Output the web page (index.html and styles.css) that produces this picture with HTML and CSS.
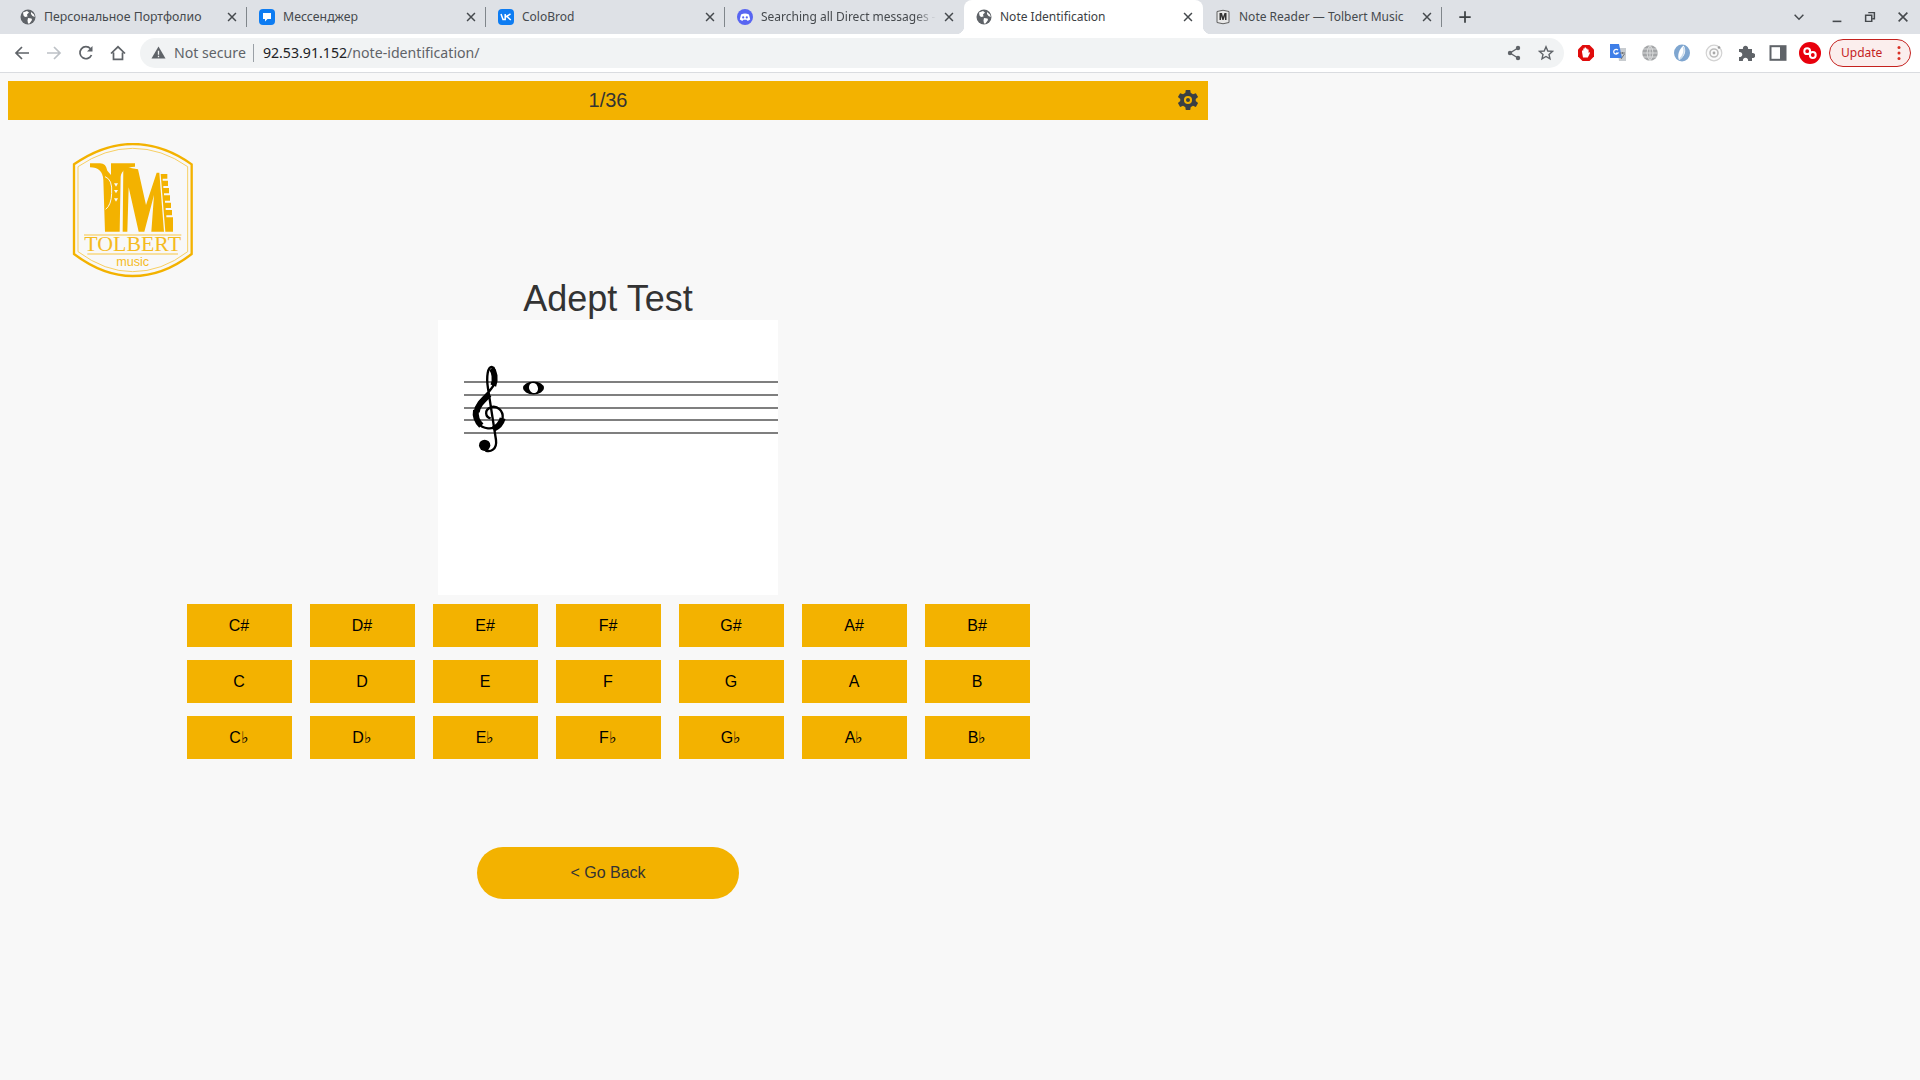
FILE: index.html
```html
<!DOCTYPE html>
<html lang="en">
<head>
  <meta charset="UTF-8" />
  <title>Note Identification</title>
  <link rel="stylesheet" href="styles.css">
</head>
<body>
  <svg class="defs" width="0" height="0">
    <symbol id="globe" viewBox="0 0 16 16">
      <circle cx="8" cy="8" r="7.5" fill="#5f6368"/>
      <path d="M3 3.5 L7 2 L9 3.5 L7 5.5 L7.5 7.5 L5 8 L3.5 6.5Z M8 9 L11.5 9.5 L12 11 L9.5 14.5 L8 14.5 L7.5 11.5Z M11 3 L14 5.5 L14.8 8 L12.5 7 L11 5Z" fill="#fff"/>
    </symbol>
    <symbol id="close" viewBox="0 0 16 16">
      <path d="M3.5 3.5 L12.5 12.5 M12.5 3.5 L3.5 12.5" stroke="#45494d" stroke-width="1.7" fill="none"/>
    </symbol>
  </svg>

  <div class="tabstrip">
    <div class="tab sep">
      <svg class="favicon"><use href="#globe"/></svg>
      <span class="tab-title ru">Персональное Портфолио</span>
      <svg class="tab-close"><use href="#close"/></svg>
    </div>
    <div class="tab sep">
      <svg class="favicon" viewBox="0 0 16 16">
        <rect width="16" height="16" rx="4" fill="#0d7cf2"/>
        <path d="M4 4 H12 V10 H8.5 L6 12.5 V10 H4Z" fill="#fff"/>
      </svg>
      <span class="tab-title ru">Мессенджер</span>
      <svg class="tab-close"><use href="#close"/></svg>
    </div>
    <div class="tab sep">
      <svg class="favicon" viewBox="0 0 16 16">
        <rect width="16" height="16" rx="4" fill="#0d7cf2"/>
        <path d="M3 5 L5 10.5 L7.2 10.5 L7.2 5 M7.5 8 L12.5 5 M9 7.5 L12.8 11" stroke="#fff" stroke-width="1.5" fill="none"/>
      </svg>
      <span class="tab-title">ColoBrod</span>
      <svg class="tab-close"><use href="#close"/></svg>
    </div>
    <div class="tab">
      <svg class="favicon" viewBox="0 0 16 16">
        <circle cx="8" cy="8" r="8" fill="#5865f2"/>
        <path d="M4 5.5 Q8 3.6 12 5.5 L13.2 10.5 Q11.5 11.8 10.3 11.8 L9.6 10.8 H6.4 L5.7 11.8 Q4.5 11.8 2.8 10.5Z" fill="#fff"/>
        <circle cx="6.2" cy="8.4" r="1.1" fill="#5865f2"/>
        <circle cx="9.8" cy="8.4" r="1.1" fill="#5865f2"/>
      </svg>
      <span class="tab-title fade">Searching all Direct messages -</span>
      <svg class="tab-close"><use href="#close"/></svg>
    </div>
    <div class="tab active">
      <svg class="favicon"><use href="#globe"/></svg>
      <span class="tab-title">Note Identification</span>
      <svg class="tab-close"><use href="#close"/></svg>
    </div>
    <div class="tab sep">
      <svg class="favicon" viewBox="0 0 16 16">
        <path d="M2 2.5 Q8 0 14 2.5 V13.5 Q8 16 2 13.5Z" fill="#e8e8e8" stroke="#5f5f5f"/>
        <path d="M4.5 4 H7 L8 8 L9.5 4 H11.5 V11 H10 V7 L8.6 11 H7.4 L6 7 V11 H4.5Z" fill="#333"/>
      </svg>
      <span class="tab-title">Note Reader — Tolbert Music</span>
      <svg class="tab-close"><use href="#close"/></svg>
    </div>
    <svg class="new-tab" viewBox="0 0 16 16">
      <path d="M8 1.5 V14.5 M1.5 8 H14.5" stroke="#3c4043" stroke-width="2" fill="none"/>
    </svg>
    <div class="window-controls">
      <svg class="tab-search" viewBox="0 0 16 16"><path d="M3 5.5 L8 10.5 L13 5.5" stroke="#45494d" stroke-width="1.7" fill="none"/></svg>
      <svg viewBox="0 0 16 16"><path d="M3 13 H13" stroke="#45494d" stroke-width="1.8" fill="none"/></svg>
      <svg viewBox="0 0 16 16"><path d="M6 3 H13 V10 H11 M3 6 H10 V13 H3Z" stroke="#45494d" stroke-width="1.7" fill="none"/></svg>
      <svg viewBox="0 0 16 16"><path d="M3 3 L13 13 M13 3 L3 13" stroke="#45494d" stroke-width="1.8" fill="none"/></svg>
    </div>
  </div>

  <div class="toolbar">
    <div class="nav-buttons">
      <svg viewBox="0 0 16 16"><path d="M15 8 H2 M8 2 L2 8 L8 14" stroke="#5f6368" stroke-width="1.7" fill="none"/></svg>
      <svg viewBox="0 0 16 16"><path d="M1 8 H14 M8 2 L14 8 L8 14" stroke="#bdc1c6" stroke-width="1.7" fill="none"/></svg>
      <svg viewBox="0 0 16 16"><path d="M13.5 10 A6 6 0 1 1 12.5 3.8" stroke="#5f6368" stroke-width="1.7" fill="none"/><path d="M14.5 1 V6.5 H9Z" fill="#5f6368"/></svg>
      <svg viewBox="0 0 16 16"><path d="M1 8.5 L8 1.8 L15 8.5 M3.5 7.5 V14.3 H12.5 V7.5" stroke="#5f6368" stroke-width="1.7" fill="none"/></svg>
    </div>
    <div class="omnibox">
      <svg class="warn" viewBox="0 0 16 16"><path d="M8 1.5 L15.5 14.5 H0.5Z" fill="#5f6368"/><path d="M8 6 V10.5 M8 11.5 V13" stroke="#f1f3f4" stroke-width="1.4"/></svg>
      <span class="not-secure">Not secure</span>
      <span class="url"><b>92.53.91.152</b>/note-identification/</span>
      <svg class="omni-icon" viewBox="0 0 16 16">
        <path d="M12 3 L4 8 L12 13" stroke="#5f6368" stroke-width="1.4" fill="none"/>
        <circle cx="12" cy="3" r="2.2" fill="#5f6368"/><circle cx="4" cy="8" r="2.2" fill="#5f6368"/><circle cx="12" cy="13" r="2.2" fill="#5f6368"/>
      </svg>
      <svg class="omni-icon" viewBox="0 0 16 16"><path d="M8 1.8 L9.8 6 L14.4 6.4 L11 9.4 L12 13.9 L8 11.5 L4 13.9 L5 9.4 L1.6 6.4 L6.2 6Z" stroke="#5f6368" stroke-width="1.4" fill="none"/></svg>
    </div>
    <div class="extensions">
      <svg viewBox="0 0 18 18">
        <path d="M5.5 1 H12.5 L17 5.5 V12.5 L12.5 17 H5.5 L1 12.5 V5.5Z" fill="#e00c0c"/>
        <path d="M6 13.5 L5 8 V6.5 H6.3 V4.5 H7.6 V3.5 H9 V4.5 H10.3 V5.5 H11.6 V9 L12.6 8 L13 9 L10.8 13.5Z" fill="#fff"/>
      </svg>
      <svg viewBox="0 0 18 18">
        <path d="M8 4 H17 V17 H10Z" fill="#c8ccd0"/>
        <path d="M1 0 H10 L13 14 H1Z" fill="#3f7fe8"/>
        <path d="M9 6.2 A2.4 2.4 0 1 0 9 9.2 H7" stroke="#fff" stroke-width="1.2" fill="none"/>
        <path d="M11 9 H16 M13.5 8 V10 M12 15 L15.5 10" stroke="#70757a" stroke-width="1" fill="none"/>
      </svg>
      <svg viewBox="0 0 18 18">
        <circle cx="9" cy="9" r="7.8" fill="#a4a6a8"/>
        <path d="M1 9 H17 M2 5 H16 M2 13 H16 M9 1 V17 M9 1 Q3 9 9 17 M9 1 Q15 9 9 17" stroke="#e3e4e5" stroke-width=".8" fill="none"/>
      </svg>
      <svg viewBox="0 0 18 18">
        <ellipse cx="9" cy="9" rx="8" ry="8.5" fill="#7fa6d0"/>
        <path d="M10.5 1.5 C14 6 12 13 6 16 C4 12 6 5 10.5 1.5Z" fill="#fff"/>
        <path d="M10.5 3 C12 7 10 12 7 15" stroke="#c9dbec" stroke-width="1.6" fill="none"/>
      </svg>
      <svg viewBox="0 0 18 18">
        <circle cx="9" cy="9" r="7.8" fill="#fbfbfb" stroke="#d2d2d2" stroke-width="1.2"/>
        <circle cx="9" cy="9" r="4" fill="none" stroke="#bcbcbc" stroke-width="1.6"/>
        <circle cx="9" cy="9" r="1.4" fill="#a8a8a8"/>
        <circle cx="14" cy="3.5" r="1.3" fill="#9a9a9a"/>
      </svg>
      <svg viewBox="0 0 18 18">
        <path d="M2 5 H6 A2.6 2.6 0 1 1 11 5 H15 V9 A2.6 2.6 0 1 1 15 14 V17 H11 A2.6 2.6 0 1 0 6 17 H2 V13 A2.6 2.6 0 1 0 2 8Z" fill="#5f6368"/>
      </svg>
      <svg viewBox="0 0 18 18">
        <rect x="1.5" y="2.2" width="15" height="13.6" fill="none" stroke="#5f6368" stroke-width="2"/>
        <rect x="11" y="2" width="5" height="14" fill="#5f6368"/>
      </svg>
      <svg class="ext-red" viewBox="0 0 22 22">
        <circle cx="11" cy="11" r="11" fill="#e8000c"/>
        <circle cx="8.2" cy="9.2" r="2.9" fill="none" stroke="#fff" stroke-width="2"/>
        <circle cx="13.8" cy="13" r="2.9" fill="none" stroke="#fff" stroke-width="2"/>
      </svg>
    </div>
    <div class="update-pill">
      <span>Update</span>
      <svg viewBox="0 0 4 16"><circle cx="2" cy="2.5" r="1.5"/><circle cx="2" cy="8" r="1.5"/><circle cx="2" cy="13.5" r="1.5"/></svg>
    </div>
  </div>

  <div class="page">
    <div class="progress-bar">
      <span>1/36</span>
      <svg class="gear" viewBox="0 0 24 24">
        <path fill-rule="evenodd" fill="#3a3f44" d="M9.6 1 H14.4 L15 4.3 Q16.3 4.8 17.4 5.6 L20.6 4.5 L23 8.6 L20.4 10.8 Q20.6 12 20.4 13.2 L23 15.4 L20.6 19.5 L17.4 18.4 Q16.3 19.2 15 19.7 L14.4 23 H9.6 L9 19.7 Q7.7 19.2 6.6 18.4 L3.4 19.5 L1 15.4 L3.6 13.2 Q3.4 12 3.6 10.8 L1 8.6 L3.4 4.5 L6.6 5.6 Q7.7 4.8 9 4.3Z M12 7.6 A4.4 4.4 0 1 0 12 16.4 A4.4 4.4 0 1 0 12 7.6Z M12 9.8 A2.2 2.2 0 1 1 12 14.2 A2.2 2.2 0 1 1 12 9.8Z"/>
      </svg>
    </div>

    <svg class="logo" viewBox="0 39 510 405">
      <path d="M72 103 Q160 42 248 42 Q340 42 425 103 V372 Q340 438 248 438 Q160 438 72 372Z" fill="none" stroke="#f3b200" stroke-width="7"/>
      <path d="M84 110 Q165 55 248 55 Q335 55 413 110 V365 Q335 425 248 425 Q165 425 84 365Z" fill="none" stroke="#f7c744" stroke-width="2.5"/>
      <path d="M120 100 H150 Q168 100 172 122 L183 135 V100 H255 V110 Q215 112 212 140 L209 305 H165 L160 150 Q158 112 120 112Z" fill="#f3b200"/>
      <path d="M165 140 Q188 148 185 190 Q184 225 167 238" fill="none" stroke="#f8f8f8" stroke-width="3"/>
      <path d="M192 160 H204 L198 170Z M192 180 H204 L198 190Z M192 205 H204 L198 215Z" fill="#f8f8f8"/>
      <path d="M220 110 L264 118 L288 225 L320 128 L328 128 L342 305 H304 L312 195 L283 305 H266 L236 172 L232 305 H218Z" fill="#f3b200"/>
      <path d="M332 132 H352 V146 H338 V152 H354 V168 H340 V174 H357 V190 H342 V196 H360 V212 H345 V218 H363 V234 H347 V240 H366 V256 H349 V262 H369 V305 H346Z" fill="#f3b200"/>
      <path d="M102 315 H394 M112 372 H384" stroke="#f7c744" stroke-width="3"/>
      <text class="logo-name" x="248" y="364" textLength="290" lengthAdjust="spacingAndGlyphs">TOLBERT</text>
      <text class="logo-music" x="248" y="408">music</text>
    </svg>

    <h1 class="test-title">Adept Test</h1>

    <div class="note-box">
      <svg viewBox="0 0 340 275" width="340" height="275">
        <path d="M26 62 H340 M26 75 H340 M26 88 H340 M26 100 H340 M26 113 H340" stroke="#555" stroke-width="1.6" fill="none"/>
        <g transform="translate(22 35) scale(.3333)">
          <path d="M92 190 C76 186 72 165 92 157 C112 150 130 168 128 188 C126 210 104 222 84 220 C58 218 42 195 46 170 C50 140 84 120 100 92 C110 72 106 38 95 36 C84 36 78 62 84 100 L108 255 C112 285 90 292 76 286" fill="none" stroke="#000" stroke-width="7"/>
          <path d="M50 172 C52 150 70 135 88 118 M64 212 C50 198 45 182 48 166 M100 92 C108 72 103 50 95 40 M100 222 C114 216 124 205 128 190" fill="none" stroke="#000" stroke-width="18"/>
          <circle cx="74" cy="271" r="17" fill="#000"/>
        </g>
        <ellipse cx="95.5" cy="68" rx="10.5" ry="6.5" fill="#000"/>
        <ellipse cx="95.5" cy="68" rx="4.4" ry="5.2" transform="rotate(-25 95.5 68)" fill="#fff"/>
      </svg>
    </div>

    <div class="note-grid">
      <button class="note-btn">C#</button>
      <button class="note-btn">D#</button>
      <button class="note-btn">E#</button>
      <button class="note-btn">F#</button>
      <button class="note-btn">G#</button>
      <button class="note-btn">A#</button>
      <button class="note-btn">B#</button>
      <button class="note-btn">C</button>
      <button class="note-btn">D</button>
      <button class="note-btn">E</button>
      <button class="note-btn">F</button>
      <button class="note-btn">G</button>
      <button class="note-btn">A</button>
      <button class="note-btn">B</button>
      <button class="note-btn">C♭</button>
      <button class="note-btn">D♭</button>
      <button class="note-btn">E♭</button>
      <button class="note-btn">F♭</button>
      <button class="note-btn">G♭</button>
      <button class="note-btn">A♭</button>
      <button class="note-btn">B♭</button>
    </div>

    <button class="back-btn">&lt; Go Back</button>
  </div>
</body>
</html>
```

FILE: styles.css
```css
* {
  box-sizing: border-box;
}

html,
body {
  height: 100%;
}

body {
  margin: 0;
  background: #f8f8f8;
  font-family: 'Liberation Sans', sans-serif;
  overflow: hidden;
}

.defs {
  display: block;
  height: 0;
}

/* browser frame */
.tabstrip {
  display: flex;
  align-items: center;
  height: 34px;
  padding-left: 8px;
  background: #dee1e6;
  font-family: 'Noto Sans', sans-serif;
}

.tab {
  position: relative;
  display: flex;
  align-items: center;
  flex: none;
  width: 239px;
  height: 34px;
  padding: 0 7px 1px 12px;
}

.tab.sep::after {
  content: "";
  position: absolute;
  right: 0;
  top: 7px;
  height: 20px;
  border-right: 1px solid #80868b;
}

.tab.active {
  background: #fff;
  border-radius: 8px 8px 0 0;
}

.tab.active::before,
.tab.active::after {
  content: "";
  position: absolute;
  bottom: 0;
  width: 8px;
  height: 8px;
}

.tab.active::before {
  left: -8px;
  background: radial-gradient(circle at 0 0, transparent 8px, #fff 8.5px);
}

.tab.active::after {
  right: -8px;
  background: radial-gradient(circle at 100% 0, transparent 8px, #fff 8.5px);
}

.favicon {
  flex: none;
  width: 16px;
  height: 16px;
  margin-right: 8px;
}

.tab-title {
  flex: 1;
  overflow: hidden;
  white-space: nowrap;
  font-size: 12px;
  color: #45494d;
}

.tab-title.ru {
  font-size: 12.3px;
}

.tab-title.fade {
  -webkit-mask-image: linear-gradient(to right, #000 88%, transparent 100%);
  mask-image: linear-gradient(to right, #000 88%, transparent 100%);
}

.tab.active .tab-title {
  color: #3c4043;
}

.tab-close {
  flex: none;
  width: 14px;
  height: 14px;
  margin-left: 6px;
  margin-right: 1px;
}

.new-tab {
  flex: none;
  width: 14px;
  height: 14px;
  margin-left: 16px;
}

.window-controls {
  display: flex;
  align-items: center;
  gap: 19px;
  margin-left: auto;
  padding-right: 10px;
}

.window-controls svg {
  width: 14px;
  height: 14px;
}

.window-controls .tab-search {
  margin-right: 5px;
}

.toolbar {
  display: flex;
  align-items: center;
  height: 39px;
  padding: 0 9px 1px 14px;
  background: #fff;
  border-bottom: 1px solid #dadce0;
}

.nav-buttons {
  display: flex;
  gap: 16px;
  margin-right: 14px;
}

.nav-buttons svg {
  width: 16px;
  height: 16px;
}

.omnibox {
  display: flex;
  align-items: center;
  flex: 1;
  height: 30px;
  padding: 0 10px 0 11px;
  background: #f1f3f4;
  border-radius: 15px;
  font-family: 'Noto Sans', sans-serif;
  font-size: 14.15px;
}

.warn {
  width: 15px;
  height: 15px;
  margin-right: 8px;
}

.not-secure {
  padding-right: 7px;
  margin-right: 9px;
  color: #5f6368;
  border-right: 1px solid #9aa0a6;
  line-height: 18px;
}

.url {
  flex: 1;
  color: #5f6368;
}

.url b {
  font-weight: 400;
  color: #202124;
}

.omni-icon {
  width: 16px;
  height: 16px;
  margin-left: 16px;
}

.extensions {
  display: flex;
  align-items: center;
  gap: 14px;
  margin-left: 13px;
}

.extensions svg {
  flex: none;
  width: 18px;
  height: 18px;
}

.extensions .ext-red {
  width: 22px;
  height: 22px;
  margin-left: -2px;
}

.update-pill {
  display: flex;
  align-items: center;
  justify-content: space-between;
  width: 82px;
  height: 28px;
  margin-left: 8px;
  padding: 0 9px 0 11px;
  background: #fbeeed;
  border: 1px solid #c5221f;
  border-radius: 14px;
  font-family: 'Noto Sans', sans-serif;
  font-size: 12px;
  color: #c5221f;
}

.update-pill svg {
  width: 4px;
  height: 16px;
  fill: #d93025;
}

/* page */
.page {
  width: 1200px;
  margin-left: 8px;
  padding-top: 8px;
  color: #333;
}

.progress-bar {
  position: relative;
  height: 39px;
  line-height: 39px;
  background: #f3b200;
  text-align: center;
  font-size: 20px;
}

.gear {
  position: absolute;
  right: 9px;
  top: 8px;
  width: 22px;
  height: 22px;
}

.logo {
  display: block;
  width: 170px;
  height: 135px;
  margin: 23px 0 0 42px;
}

.logo-name {
  font-family: 'Liberation Serif', serif;
  font-size: 60px;
  fill: #f5bb1f;
  text-anchor: middle;
}

.logo-music {
  font-family: 'Liberation Sans', sans-serif;
  font-size: 38px;
  fill: #f5bb1f;
  text-anchor: middle;
}

.test-title {
  margin: 0;
  height: 42px;
  line-height: 42px;
  text-align: center;
  font-size: 36px;
  font-weight: 400;
}

.note-box {
  width: 340px;
  height: 275px;
  margin: 0 auto;
  background: #fff;
}

.note-box svg {
  display: block;
}

.note-grid {
  display: grid;
  grid-template-columns: repeat(7, 105px);
  gap: 13px 18px;
  justify-content: center;
  margin-top: 9px;
}

.note-btn {
  height: 43px;
  padding: 0;
  background: #f3b200;
  border: none;
  font-family: 'Liberation Sans', sans-serif;
  font-size: 16px;
  color: #000;
}

.back-btn {
  display: block;
  width: 262px;
  height: 52px;
  margin: 88px auto 0;
  background: #f3b200;
  border: none;
  border-radius: 26px;
  font-family: 'Liberation Sans', sans-serif;
  font-size: 16px;
  color: #333;
}
```
